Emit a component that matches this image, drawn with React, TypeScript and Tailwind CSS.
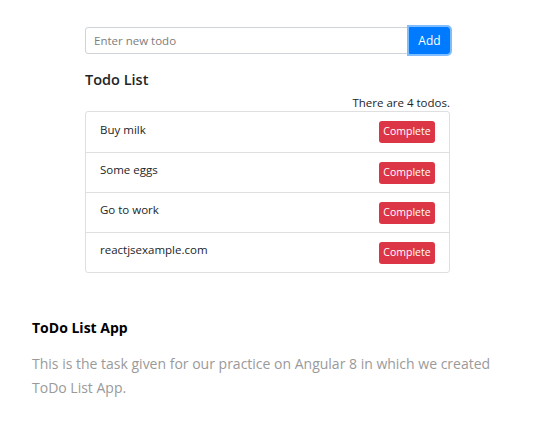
const todos = ["Buy milk", "Some eggs", "Go to work", "reactjsexample.com"];

export default function App() {
  return (
    <div className="w-[545px] h-[427px] bg-white font-['Open_Sans',sans-serif]">
      <div className="pt-[27px] pl-[85px] w-[450px]">
        <div className="flex h-[27px]">
          <input
            className="flex-1 h-[27px] border border-[#ced4da] rounded-l-[3px] px-[8px] text-[11.5px] text-[#495057] placeholder:text-[#7d7d7d] outline-none"
            placeholder="Enter new todo"
          />
          <button className="w-[41px] h-[27px] bg-[#007bff] text-white text-[12px] rounded-r-[3px] ring-2 ring-[#80bdff] border border-[#007bff]">
            Add
          </button>
        </div>
        <h2 className="mt-[16px] text-[14.5px] font-semibold text-[#212529] leading-[20px]">
          Todo List
        </h2>
        <p className="mt-[6px] text-right text-[11.5px] text-[#212529] leading-[14px]">
          There are 4 todos.
        </p>
        <ul className="mt-[1px] border border-[#dfdfdf] rounded-[3px]">
          {todos.map((t, i) => (
            <li
              key={t}
              className={`flex items-center justify-between h-[40px] pl-[14px] pr-[14px] ${
                i > 0 ? "border-t border-[#dfdfdf]" : ""
              }`}
            >
              <span className="text-[11.5px] text-[#212529] -mt-[5px]">{t}</span>
              <button className="w-[56px] h-[22px] bg-[#dc3545] text-white text-[10.5px] rounded-[3px]">
                Complete
              </button>
            </li>
          ))}
        </ul>
      </div>
      <div className="pl-[32px] pt-[45px]">
        <h3 className="text-[14px] font-bold text-black leading-[20px]">ToDo List App</h3>
        <p className="mt-[14px] w-[480px] text-[14px] text-[#9a9a9a] leading-[24px]">
          This is the task given for our practice on Angular 8 in which we created ToDo List App.
        </p>
      </div>
    </div>
  );
}
